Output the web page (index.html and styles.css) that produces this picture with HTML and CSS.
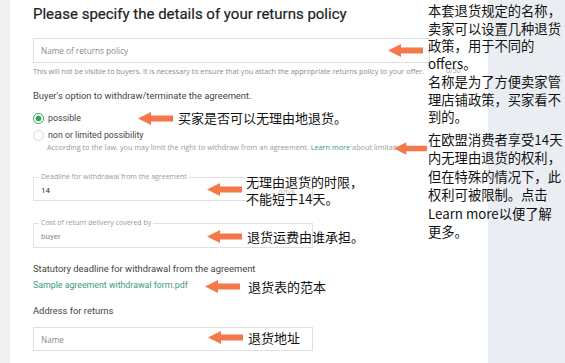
FILE: index.html
```html
<!DOCTYPE html>
<html lang="en">
<head>
    <meta charset="UTF-8">
    <meta name="viewport" content="width=device-width, initial-scale=1.0">
    <title>Returns policy</title>
    <link rel="stylesheet" href="styles.css">
</head>
<body>

<div class="page">
    <div class="gutter"></div>

    <div class="card">
        <h1 class="title">Please specify the details of your returns policy</h1>

        <div class="input wide"><span class="placeholder">Name of returns policy</span></div>
        <div class="hint">This will not be visible to buyers. It is necessary to ensure that you attach the appropriate returns policy to your offer.</div>
        <span class="counter">0/50</span>

        <div class="label first">Buyer's option to withdraw/terminate the agreement.</div>

        <div class="radio-row">
            <span class="radio checked"></span>
            <span class="radio-label">possible</span>
        </div>
        <div class="radio-row second">
            <span class="radio"></span>
            <span class="radio-label">non or limited possibility</span>
        </div>
        <div class="sub-hint">According to the law, you may limit the right to withdraw from an agreement. <span class="link">Learn more</span> about limitations</div>

        <div class="outlined deadline">
            <span class="legend">Deadline for withdrawal from the agreement</span>
            <span class="value">14</span>
            <span class="suffix">days</span>
        </div>

        <div class="outlined cost">
            <span class="legend">Cost of return delivery covered by</span>
            <span class="value muted">buyer</span>
        </div>

        <div class="label statutory">Statutory deadline for withdrawal from the agreement</div>
        <div class="link pdf">Sample agreement withdrawal form.pdf</div>

        <div class="label address">Address for returns</div>
        <div class="input narrow"><span class="placeholder">Name</span></div>

        <!-- annotations -->
        <svg class="arrow a-name" width="35" height="13" viewBox="0 0 35 13"><polygon points="0,6.5 13,0 13,3.5 35,3.5 35,9.5 13,9.5 13,13"/></svg>
        <svg class="arrow a-possible" width="35" height="13" viewBox="0 0 35 13"><polygon points="0,6.5 13,0 13,3.5 35,3.5 35,9.5 13,9.5 13,13"/></svg>
        <div class="note n-possible">买家是否可以无理由地退货。</div>
        <svg class="arrow a-limit" width="33" height="13" viewBox="0 0 35 13"><polygon points="0,6.5 13,0 13,3.5 35,3.5 35,9.5 13,9.5 13,13"/></svg>
        <svg class="arrow a-deadline" width="35" height="13" viewBox="0 0 35 13"><polygon points="0,6.5 13,0 13,3.5 35,3.5 35,9.5 13,9.5 13,13"/></svg>
        <div class="note n-deadline">无理由退货的时限，<br>不能短于14天。</div>
        <svg class="arrow a-cost" width="35" height="13" viewBox="0 0 35 13"><polygon points="0,6.5 13,0 13,3.5 35,3.5 35,9.5 13,9.5 13,13"/></svg>
        <div class="note n-cost">退货运费由谁承担。</div>
        <svg class="arrow a-pdf" width="35" height="13" viewBox="0 0 35 13"><polygon points="0,6.5 13,0 13,3.5 35,3.5 35,9.5 13,9.5 13,13"/></svg>
        <div class="note n-pdf">退货表的范本</div>
        <svg class="arrow a-address" width="35" height="13" viewBox="0 0 35 13"><polygon points="0,6.5 13,0 13,3.5 35,3.5 35,9.5 13,9.5 13,13"/></svg>
        <div class="note n-address">退货地址</div>

        <div class="side-note s-top">本套退货规定的名称，<br>卖家可以设置几种退货<br>政策，用于不同的<br>offers。<br>名称是为了方便卖家管<br>理店铺政策，买家看不<br>到的。</div>
        <div class="side-note s-law">在欧盟消费者享受14天<br>内无理由退货的权利，<br>但在特殊的情况下，此<br>权利可被限制。点击<br>Learn more以便了解<br>更多。</div>
    </div>

    <div class="rest"></div>
</div>

</body>
</html>
```

FILE: styles.css
```css
body {
    margin: 0;
    font-family: Roboto, "Noto Sans CJK SC", sans-serif;
    color: #333;
    background-color: #eaedf1;
}
.page {
    display: flex;
    height: 363px;
    overflow: hidden;
}
.gutter {
    width: 10px;
    background-color: #eef0f2;
}
.card {
    position: relative;
    width: 455px;
    padding: 4px 0 0 23px;
    background-color: #fff;
}
.rest {
    flex: 1;
}
.title {
    margin: 0;
    font-size: 15px;
    font-weight: 400;
    line-height: 20px;
    color: #222;
    -webkit-text-stroke: 0.2px #222;
}
.input {
    box-sizing: border-box;
    display: flex;
    align-items: center;
    height: 25px;
    padding-left: 7px;
    border: 1px solid #dedede;
}
.input.wide {
    width: 397px;
    margin-top: 14px;
}
.input.narrow {
    width: 280px;
    height: 24px;
    margin-top: 9px;
}
.placeholder {
    font-family: "Open Sans", sans-serif;
    font-size: 8.2px;
    color: #8a8a8a;
}
.hint {
    margin-top: 3px;
    font-family: "Open Sans", sans-serif;
    font-size: 7.2px;
    line-height: 10px;
    color: #8a8a8a;
    white-space: nowrap;
}
.counter {
    position: absolute;
    left: 436px;
    top: 66px;
    font-family: "Open Sans", sans-serif;
    font-size: 7px;
    color: #999;
}
.label {
    font-size: 9.4px;
    line-height: 14px;
    color: #444;
}
.label.first {
    margin-top: 13px;
}
.radio-row {
    display: flex;
    align-items: center;
    height: 14px;
    margin-top: 8px;
}
.radio-row.second {
    margin-top: 3px;
}
.radio {
    box-sizing: border-box;
    width: 11px;
    height: 11px;
    margin-right: 4px;
    border: 1px solid #d8d8d8;
    border-radius: 50%;
}
.radio.checked {
    border-color: #33a55c;
    background: radial-gradient(circle, #33a55c 0 2.6px, #fff 3.2px);
}
.radio-label {
    font-size: 8.8px;
    color: #444;
}
.sub-hint {
    margin-left: 14px;
    font-family: "Open Sans", sans-serif;
    font-size: 7.3px;
    line-height: 10px;
    color: #999;
    white-space: nowrap;
}
.link {
    color: #3e9b7c;
}
.outlined {
    position: relative;
    box-sizing: border-box;
    display: flex;
    align-items: center;
    width: 280px;
    height: 25px;
    padding: 2px 7px 0;
    border: 1px solid #e0e0e0;
}
.outlined.deadline {
    margin-top: 25px;
    height: 24px;
}
.outlined.cost {
    margin-top: 22px;
}
.legend {
    position: absolute;
    left: 5px;
    top: -6px;
    padding: 0 2px;
    background-color: #fff;
    font-family: "Open Sans", sans-serif;
    font-size: 7px;
    line-height: 10px;
    color: #999;
}
.value {
    flex: 1;
    font-size: 8px;
    color: #333;
}
.value.muted {
    color: #888;
}
.suffix {
    margin-right: 10px;
    font-family: "Open Sans", sans-serif;
    font-size: 8px;
    color: #c4c4c4;
}
.label.statutory {
    margin-top: 14px;
}
.pdf {
    margin-top: 2px;
    font-size: 8.8px;
    line-height: 14px;
}
.label.address {
    margin-top: 12px;
}
.arrow {
    position: absolute;
    fill: #f4784a;
}
.a-name { left: 378px; top: 44px; }
.a-possible { left: 128px; top: 112px; }
.a-limit { left: 384px; top: 142px; }
.a-deadline { left: 197px; top: 183px; }
.a-cost { left: 197px; top: 230px; }
.a-pdf { left: 195px; top: 280px; }
.a-address { left: 198px; top: 331px; }
.note {
    position: absolute;
    font-family: "Noto Sans CJK SC", sans-serif;
    font-size: 13px;
    line-height: 16.5px;
    color: #111;
    white-space: nowrap;
}
.n-possible { left: 168px; top: 110px; }
.n-deadline { left: 236px; top: 174px; }
.n-cost { left: 237px; top: 229px; }
.n-pdf { left: 238px; top: 279px; }
.n-address { left: 238px; top: 330px; }
.side-note {
    position: absolute;
    left: 418px;
    font-family: "Noto Sans CJK SC", sans-serif;
    font-size: 13.3px;
    color: #111;
    white-space: nowrap;
}
.s-top {
    top: 2px;
    line-height: 17.7px;
}
.s-law {
    top: 131px;
    line-height: 18.4px;
}
```
